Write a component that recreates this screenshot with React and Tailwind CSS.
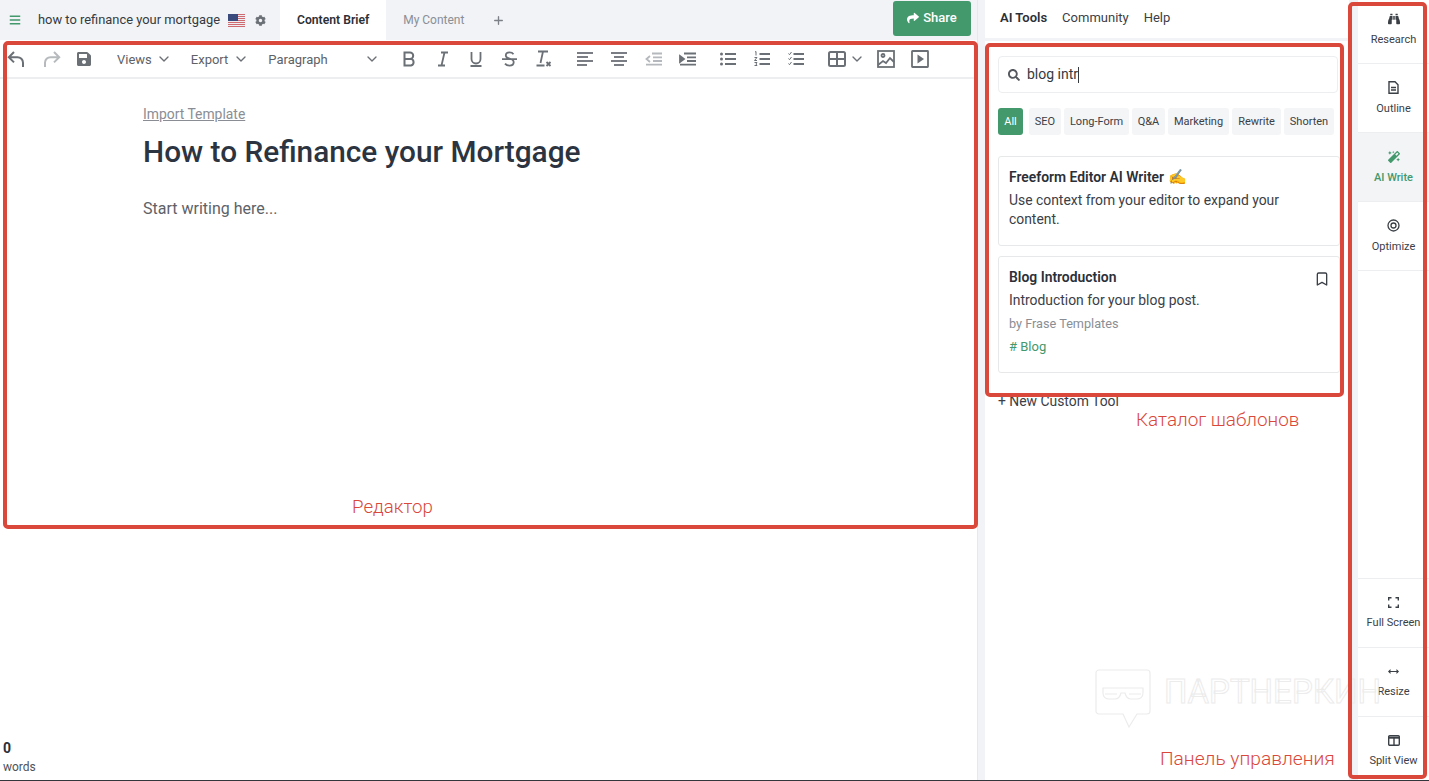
import React from "react";
import { ChevronDown, Plus, Bookmark } from "lucide-react";
import { FaBars, FaCog, FaShare, FaSave, FaBinoculars, FaMagic, FaSearch } from "react-icons/fa";

const G = "#6b7076";
const Svg = ({ children, w = 20, h = 20, className = "" }) => (
  <svg width={w} height={h} viewBox={`0 0 ${w} ${h}`} fill="none" stroke={G} strokeWidth="1.8" className={`shrink-0 ${className}`}>{children}</svg>
);
const Undo = () => <Svg w={18} h={18}><path d="M7 2 1.800 7.200 7 12.400M1.800 7.200H10.500a5.500 5.500 0 0 1 5.500 5.500V17" strokeWidth="2" /></Svg>;
const Redo = () => <svg width="18" height="18" viewBox="0 0 18 18" fill="none" stroke="#b7babd" strokeWidth="2" className="shrink-0"><path d="M11 2l5.200 5.200L11 12.400M16.200 7.200H7.500A5.500 5.500 0 0 0 2 12.700V17" /></svg>;
const Lines = ({ rows }) => (
  <Svg w={18} h={16}>
    {rows.map(([a, b], i) => <path key={i} d={`M${a} ${2 + i * 4}H${b}`} />)}
  </Svg>
);
const Bold = () => <Svg w={14} h={16}><path d="M2.500 1.500H8a3.200 3.200 0 0 1 0 6.400H2.500ZM2.500 7.900H9a3.400 3.400 0 0 1 0 6.600H2.500Z" strokeWidth="2" /></Svg>;
const Italic = () => <Svg w={12} h={16}><path d="M4 1.500h7M1 14.500h7M7.500 1.500l-3 13" /></Svg>;
const Under = () => <Svg w={14} h={16}><path d="M2.500 1v7a4.500 4.500 0 0 0 9 0V1M1.500 15h11" /></Svg>;
const Strike = () => <Svg w={17} h={16}><path d="M12.500 3.200C11.500 1.800 10 1.400 8.500 1.400 6.300 1.400 4.800 2.600 4.800 4.400c0 1.500 1 2.400 3.700 3.100 3 .8 4.200 1.900 4.200 3.800 0 2-1.800 3.300-4.200 3.300-1.800 0-3.400-.6-4.500-2M1 8.200h15" /></Svg>;
const ClearF = () => <Svg w={17} h={17}><path d="M3 1.500h10M8 1.500 5.500 13M1.500 15.500h8M11.500 12l4 4M15.500 12l-4 4" /></Svg>;
const Outdent = () => (
  <Svg w={17} h={14}><g stroke="#b5b8bc"><path d="M7 1.500h10M8 5.300h9M8 9h9M1 12.700h16M5 4 1.500 7 5 10" /></g></Svg>
);
const Indent = () => (
  <Svg w={17} h={14}><path d="M5 1.500h12M8 5.300h9M8 9h9M1 12.700h16" /><path d="M1 4l4 3-4 3Z" fill={G} /></Svg>
);
const UL = () => (
  <Svg w={16} h={14}><path d="M5 2h11M5 7h11M5 12h11" /><circle cx="1.500" cy="2" r="1.500" fill={G} stroke="none" /><circle cx="1.500" cy="7" r="1.500" fill={G} stroke="none" /><circle cx="1.500" cy="12" r="1.500" fill={G} stroke="none" /></Svg>
);
const OL = () => (
  <Svg w={16} h={16}><path d="M5.500 3h10.500M5.500 8h10.500M5.500 13h10.500" /><g strokeWidth="1"><path d="M1 1l1-.5v4M.5 6.500h2.500l-2.500 3h2.500M.5 11.500h2.500l-1 1.500 1 1.500h-2.500" /></g></Svg>
);
const CL = () => (
  <Svg w={16} h={16}><path d="M5.500 3h10.500M5.500 8h10.500M5.500 13h10.500" /><g strokeWidth="1"><path d="M.5 2.500l1 1.200L3.500 1M.5 7.500l1 1.200L3.500 6M.5 12.500l1 1.200L3.500 11" /></g></Svg>
);
const TableI = () => <Svg w={18} h={16}><rect x="1" y="1" width="16" height="14" rx="1.500" strokeWidth="2" /><path d="M1 8h16M9 1v14" strokeWidth="2" /></Svg>;
const ImageI = () => <Svg w={18} h={18}><rect x="1" y="1" width="16" height="16" strokeWidth="1.800" /><circle cx="6" cy="5.500" r="1.500" /><path d="M1 15l5-4 3 2 4-5 4 4" /></Svg>;
const VideoI = () => <Svg w={18} h={18}><rect x="1" y="1" width="16" height="16" rx=".5" strokeWidth="1.800" /><path d="M6.500 4.500l6.500 4.500-6.500 4.500Z" fill={G} stroke="none" /></Svg>;

const Flag = () => (
  <svg width="17" height="13" viewBox="0 0 17 13" className="shrink-0">
    <rect width="17" height="13" fill="#eeeef2" />
    {[0, 2, 4, 6, 8, 10, 12].map((y) => <rect key={y} y={y} width="17" height="1" fill="#cf6a70" />)}
    <rect width="10" height="7" fill="#3a4a7d" />
  </svg>
);

const Chip = ({ children, active, className = "" }) => (
  <span className={`h-[27px] pt-[1px] flex items-center justify-center rounded-[3px] text-[11px] ${active ? "bg-[#43986c] text-white" : "bg-[#f4f5f6] text-[#3b4047]"} ${className}`}>{children}</span>
);

const Side = ({ icon, label, active, first, bottom, border }) => (
  <div className={`${first ? "h-[64px] pt-[11px]" : "h-[69px] pt-[16px]"} shrink-0 flex flex-col items-center border-[#eceef0] ${border === "b" ? "border-b" : "border-t"} ${active ? "bg-[#f2f4f6] text-[#43986c] font-medium" : "text-[#3b4047]"}`}>
    <div className="h-[15px] flex items-center justify-center">{icon}</div>
    <span className={`${bottom ? "mt-[6px]" : "mt-[7px]"} text-[11px] leading-[14px]`}>{label}</span>
  </div>
);

const Label = ({ children, className = "" }) => (
  <span className={`absolute font-light text-[#d9483b] leading-[24px] ${className}`}>{children}</span>
);

export default function App() {
  return (
    <div className="relative w-[1429px] h-[781px] overflow-hidden flex bg-white border-b border-[#33363a] font-['Roboto',sans-serif] text-[#3b4047]">
      {/* left column */}
      <div className="w-[977px] shrink-0 flex flex-col">
        <div className="h-[40px] shrink-0 flex items-center bg-[#f1f3f7] pr-[6px]">
          <FaBars className="ml-[9px] text-[#43986c]" size={12} />
          <span className="ml-[17px] text-[12.900px] text-[#343a40]">how to refinance your mortgage</span>
          <span className="ml-[8px]"><Flag /></span>
          <FaCog className="ml-[10px] text-[#6b7076]" size={11} />
          <div className="ml-[14px] w-[106px] h-full bg-white flex items-center justify-center text-[12.200px] font-semibold text-[#2b3038]">Content Brief</div>
          <span className="ml-[17px] text-[12px] text-[#8a8f95]">My Content</span>
          <Plus className="ml-[28px] text-[#7d8187]" size={13} strokeWidth={2.500} />
          <button className="ml-auto w-[78px] h-[35px] mb-[4px] rounded-[3px] bg-[#43986c] text-white text-[13px] font-medium flex items-center justify-center gap-[4px]">
            <FaShare size={12} /> Share
          </button>
        </div>
        <div className="h-[39px] shrink-0 flex items-center border-b-2 border-[#eceef0] text-[13px] text-[#5d6268]">
          <span className="ml-[7px] flex"><Undo /></span>
          <span className="ml-[18px] flex"><Redo /></span>
          <FaSave className="ml-[15px] text-[#6b7076]" size={16} />
          <span className="ml-[25px] mt-[2px]">Views</span>
          <ChevronDown className="ml-[4px]" size={16} color={G} />
          <span className="ml-[19px] mt-[2px]">Export</span>
          <ChevronDown className="ml-[5px]" size={16} color={G} />
          <span className="ml-[19px] mt-[2px]">Paragraph</span>
          <ChevronDown className="ml-[36px]" size={16} color={G} />
          <span className="ml-[22px] flex"><Bold /></span>
          <span className="ml-[21px] flex"><Italic /></span>
          <span className="ml-[20px] flex"><Under /></span>
          <span className="ml-[18px] flex"><Strike /></span>
          <span className="ml-[17px] flex"><ClearF /></span>
          <span className="ml-[24px] flex"><Lines rows={[[1, 17], [1, 12], [1, 17], [1, 11]]} /></span>
          <span className="ml-[16px] flex"><Lines rows={[[1, 17], [4, 14], [1, 17], [4, 14]]} /></span>
          <span className="ml-[17px] flex"><Outdent /></span>
          <span className="ml-[17px] flex"><Indent /></span>
          <span className="ml-[24px] flex"><UL /></span>
          <span className="ml-[18px] flex"><OL /></span>
          <span className="ml-[18px] flex"><CL /></span>
          <span className="ml-[24px] flex"><TableI /></span>
          <ChevronDown className="ml-[3px]" size={16} color={G} />
          <span className="ml-[12px] flex"><ImageI /></span>
          <span className="ml-[16px] flex"><VideoI /></span>
        </div>
        <div className="flex-1 flex flex-col pl-[143px] pt-[26px]">
          <span className="text-[13.900px] leading-[18px] text-[#8a8e94] underline self-start">Import Template</span>
          <h1 className="mt-[9px] text-[29.800px] leading-[40px] font-medium text-[#2b3440]">How to Refinance your Mortgage</h1>
          <p className="mt-[25px] text-[16px] leading-[24px] text-[#5d6268]">Start writing here...</p>
        </div>
        <div className="pl-[3px] pb-[5px]">
          <div className="text-[14px] leading-[18px] font-bold text-[#2b3038]">0</div>
          <div className="mt-[2px] text-[12px] leading-[16px] text-[#4d5258]">words</div>
        </div>
      </div>

      <div className="w-[8px] shrink-0 bg-[#f1f3f7] border-l border-[#e6e8ec]" />

      {/* right panel */}
      <div className="w-[364px] shrink-0 flex flex-col">
        <div className="h-[41px] shrink-0 flex items-center pl-[15px] pb-[2px] gap-[15px] border-b-[3px] border-[#f1f3f7] text-[13px]">
          <span className="font-semibold text-[#2b3038]">AI Tools</span>
          <span className="text-[#3b4047]">Community</span>
          <span className="text-[#3b4047]">Help</span>
        </div>
        <div className="pl-[13px] pr-[9px] pt-[15px] flex flex-col">
          <div className="w-[340px] h-[37px] rounded-[4px] border border-[#eceef0] flex items-center pl-[9px]">
            <FaSearch size={12} color="#55595f" />
            <span className="ml-[7px] text-[14px] text-[#343a40]">blog intr</span>
            <span className="w-px h-[16px] bg-[#343a40]" />
          </div>
          <div className="mt-[15px] flex gap-[3px]">
            <Chip active className="w-[25px] mr-[3px]">All</Chip>
            <Chip className="w-[32px]">SEO</Chip>
            <Chip className="w-[65px]">Long-Form</Chip>
            <Chip className="w-[33px]">Q&A</Chip>
            <Chip className="w-[61px]">Marketing</Chip>
            <Chip className="w-[49px]">Rewrite</Chip>
            <Chip className="w-[50px]">Shorten</Chip>
          </div>
          <div className="mt-[21px] w-[342px] h-[90px] rounded-[3px] border border-[#e6e8ea] pl-[10px] pt-[11px]">
            <div className="text-[13.900px] leading-[18px] font-semibold text-[#2b3038]">Freeform Editor AI Writer <span className="text-[#e0a52f] font-bold text-[15px]">✍</span></div>
            <p className="mt-[5px] w-[300px] text-[13.900px] leading-[19px] text-[#3b4047]">Use context from your editor to expand your content.</p>
          </div>
          <div className="relative mt-[10px] w-[342px] h-[117px] rounded-[3px] border border-[#e6e8ea] pl-[10px] pt-[11px]">
            <div className="text-[13.900px] leading-[18px] font-semibold text-[#2b3038]">Blog Introduction</div>
            <Bookmark className="absolute right-[9px] top-[14px]" size={16} strokeWidth={2} color="#3b4047" />
            <p className="mt-[5px] text-[13.900px] leading-[18px] text-[#3b4047]">Introduction for your blog post.</p>
            <p className="mt-[6px] text-[12.700px] leading-[17px] text-[#8a8e94]">by Frase Templates</p>
            <p className="mt-[6px] text-[13px] leading-[17px] text-[#43986c]"># Blog</p>
          </div>
          <div className="mt-[19px] text-[13.900px] leading-[18px] text-[#3b4047]">+ New Custom Tool</div>
        </div>
      </div>

      <div className="w-[9px] shrink-0 bg-[#f1f3f7]" />

      {/* sidebar */}
      <div className="flex-1 flex flex-col">
        <Side first border="b" icon={<FaBinoculars size={12} />} label="Research" />
        <Side border="b" icon={<svg width="11" height="13" viewBox="0 0 11 13" fill="none" stroke="#3b4047" strokeWidth="1.400"><path d="M1 .8h6l3 3v8.400H1ZM3 6.500h5M3 9h5" /></svg>} label="Outline" />
        <Side active border="b" icon={<FaMagic size={12} />} label="AI Write" />
        <Side border="b" icon={<svg width="13" height="13" viewBox="0 0 13 13" fill="none" stroke="#3b4047" strokeWidth="1.300"><circle cx="6.500" cy="6.500" r="5.500" /><circle cx="6.500" cy="6.500" r="2.500" /></svg>} label="Optimize" />
        <div className="flex-1" />
        <Side bottom border="t" icon={<svg width="11" height="11" viewBox="0 0 11 11" fill="none" stroke="#3b4047" strokeWidth="1.400"><path d="M.7 3.500V.7h2.800M7.500.7h2.800v2.800M10.300 7.500v2.800H7.500M3.500 10.300H.7V7.500" /></svg>} label="Full Screen" />
        <Side bottom border="t" icon={<svg width="11" height="7" viewBox="0 0 11 7" fill="#3b4047" stroke="#3b4047"><path d="M2 3.500h7" strokeWidth="1" /><path d="M0 3.500l2.500-2.500v5ZM11 3.500 8.500 1v5Z" stroke="none" /></svg>} label="Resize" />
        <div className="h-[64px] shrink-0 flex flex-col items-center pt-[16px] border-t border-[#eceef0] text-[#3b4047]">
          <div className="h-[15px] flex items-center justify-center"><svg width="12" height="11" viewBox="0 0 12 11" fill="none" stroke="#3b4047" strokeWidth="1.400"><rect x=".7" y=".7" width="10.600" height="9.600" rx="1" /><path d="M.7 2.700h10.600" strokeWidth="2" /><path d="M6 2.500v8" /></svg></div>
          <span className="mt-[6px] text-[11px] leading-[14px]">Split View</span>
        </div>
      </div>

      {/* watermark */}
      <div className="absolute left-[1095px] top-[669px] flex items-start pointer-events-none">
        <svg width="56" height="60" viewBox="0 0 56 60" fill="none" stroke="#ececec" strokeWidth="1.200">
          <path d="M4 1h48a3 3 0 0 1 3 3v38a3 3 0 0 1-3 3H42l-8 13-6-13H4a3 3 0 0 1-3-3V4a3 3 0 0 1 3-3Z" />
          <path d="M8 19h40v5c0 4-3 6-6 6h-6c-3 0-5-2-6-6h-4c-1 4-3 6-6 6h-6c-3 0-6-2-6-6Z" />
          <path d="M10 25h12M34 25h12" />
        </svg>
        <span className="ml-[13px] mt-[4px] text-[33px] leading-[38px] text-transparent [-webkit-text-stroke:1px_#ececec]">ПАРТНЕРКИН</span>
      </div>

      {/* annotation boxes */}
      <div className="absolute left-[3px] top-[41px] w-[975px] h-[488px] rounded-[5px] border-[4px] border-[#d9483b] pointer-events-none" />
      <div className="absolute left-[985px] top-[43px] w-[359px] h-[354px] rounded-[5px] border-[4px] border-[#d9483b] pointer-events-none" />
      <div className="absolute left-[1348px] top-[2px] w-[79px] h-[777px] rounded-[5px] border-[4px] border-[#d9483b] pointer-events-none" />
      <Label className="text-[18.700px] left-[352px] top-[495px]">Редактор</Label>
      <Label className="text-[18.900px] left-[1136px] top-[408px]">Каталог шаблонов</Label>
      <Label className="text-[19.200px] left-[1160px] top-[747px]">Панель управления</Label>
    </div>
  );
}
